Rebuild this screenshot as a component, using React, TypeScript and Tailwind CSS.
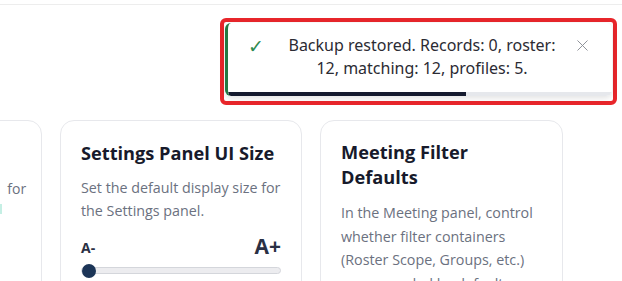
import { X } from "lucide-react";

const App = () => {
  return (
    <div
      className="relative w-[622px] h-[281px] overflow-hidden bg-white"
      style={{ fontFamily: '"Open Sans", "Noto Sans", sans-serif' }}
    >
      <div className="h-[5px] border-b border-[#ededed]" />

      {/* toast, with the red highlight frame round it */}
      <div className="flex justify-end pr-[5px] pt-[13px] h-[115px]">
        <div className="w-[397px] h-[87px] border-[4px] border-[#e8262b] rounded-[6px] p-[1px]">
          <div className="relative h-[73px] bg-white rounded-[6px] border-l-[3px] border-[#237a43] shadow-[0_2px_6px_rgba(0,0,0,0.12)] overflow-hidden flex items-start">
            <div className="w-[52px] pt-[9px] pl-[20px] text-[#2e8b50] text-[19px]">✓</div>
            <p
              className="flex-1 pt-[11px] text-center text-[16px] leading-[23px] text-[#2b2b33]"
              style={{ fontFamily: '"Noto Sans", "Open Sans", sans-serif' }}
            >
              Backup restored. Records: 0, roster:
              <br />
              12, matching: 12, profiles: 5.
            </p>
            <div className="w-[48px] pt-[13px] pl-[9px] text-[#8a8d95]">
              <X size={19} strokeWidth={1.2} />
            </div>
            <div className="absolute left-0 right-0 bottom-0 h-[4px] bg-[#e6e8ec]">
              <div className="h-full w-[62%] bg-[#151a2e]" />
            </div>
          </div>
        </div>
      </div>

      {/* settings cards */}
      <div className="flex gap-[18px] ml-[-200px]">
        <div className="w-[242px] h-[200px] shrink-0 rounded-[14px] border border-[#e7e8ec] px-[20px] pt-[56px]">
          <div className="text-[14px] leading-[23px] text-[#6b7180] whitespace-nowrap text-right">
            Choose the colours shown<span className="ml-[14px]">for</span>
          </div>
          <div className="mt-[4px] ml-[178px] w-[3px] h-[10px] bg-[#c5efe4]" />
        </div>

        <div className="w-[242px] h-[200px] shrink-0 rounded-[14px] border border-[#e7e8ec] px-[20px] pt-[19px]">
          <h3 className="text-[18.2px] font-bold leading-[26px] text-[#171a2b]">
            Settings Panel UI Size
          </h3>
          <p className="mt-[10px] text-[14.3px] leading-[23px] text-[#6b7180]">
            Set the default display size for the Settings panel.
          </p>
          <div className="mt-[13px] flex items-end justify-between text-[#2a3044] font-bold">
            <span className="text-[14px] leading-[18px]">A-</span>
            <span className="text-[21px] leading-[22px]">A+</span>
          </div>
          <div className="relative mt-[10px] h-[7px] rounded-full border border-[#d4d6db] bg-[#ececef]">
            <div className="absolute left-0 top-1/2 -translate-y-1/2 w-[14px] h-[14px] rounded-full bg-[#1c3557]" />
          </div>
        </div>

        <div className="w-[243px] h-[200px] shrink-0 rounded-[14px] border border-[#e7e8ec] px-[20px] pt-[19px]">
          <h3 className="text-[18.2px] font-bold leading-[25px] text-[#171a2b]">
            Meeting Filter
            <br />
            Defaults
          </h3>
          <p className="mt-[11px] text-[14.3px] leading-[23.5px] text-[#6b7180]">
            In the Meeting panel, control whether filter containers (Roster Scope, Groups, etc.) are
            expanded by default.
          </p>
        </div>
      </div>
    </div>
  );
};

export default App;
